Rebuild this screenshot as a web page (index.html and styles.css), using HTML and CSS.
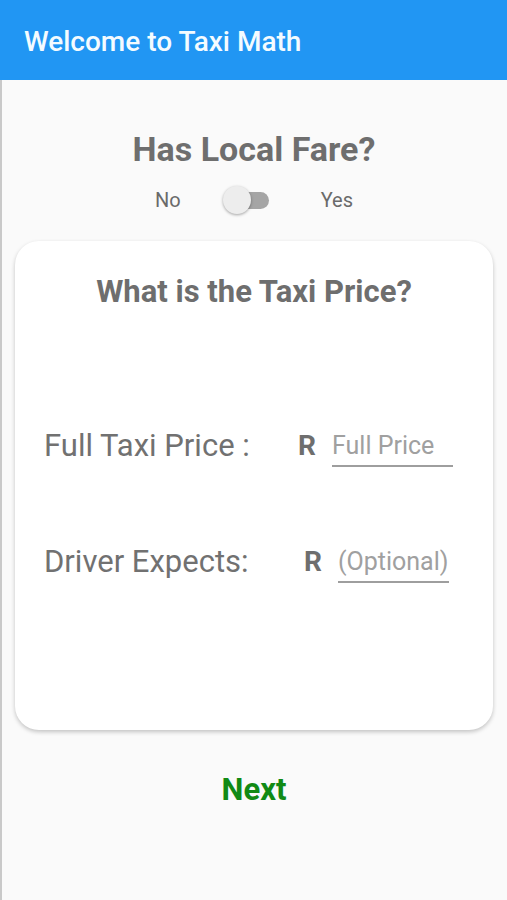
FILE: index.html
```html
<!DOCTYPE html>
<html lang="en">
<head>
    <meta charset="UTF-8">
    <title>Taxi Math</title>
    <link rel="stylesheet" href="styles.css">
</head>
<body>
<div class="app">
    <div class="topbar">Welcome to Taxi Math</div>
    <div class="page">
        <h1 class="question">Has Local Fare?</h1>
        <div class="toggle-row">
            <span class="opt">No</span>
            <span class="switch"><span class="track"></span><span class="thumb"></span></span>
            <span class="opt">Yes</span>
        </div>

        <div class="card">
            <h2 class="card-title">What is the Taxi Price?</h2>
            <div class="fields">
                <div class="field">
                    <span class="label">Full Taxi Price :</span>
                    <span class="cur">R</span>
                    <input class="amount" type="text" placeholder="Full Price">
                </div>
                <div class="field field-opt">
                    <span class="label">Driver Expects:</span>
                    <span class="cur">R</span>
                    <input class="amount" type="text" placeholder="(Optional)">
                </div>
            </div>
        </div>

        <div class="next">Next</div>
    </div>
</div>
</body>
</html>
```

FILE: styles.css
```css
* {
    padding: 0;
    margin: 0;
    box-sizing: border-box;
}

body {
    font-family: Roboto, "Liberation Sans", sans-serif;
    background: #fafafa;
}

.app {
    width: 507px;
    height: 900px;
    display: flex;
    flex-direction: column;
}

.topbar {
    height: 80px;
    background: #2196f3;
    color: #f4fbff;
    font-size: 28px;
    font-weight: 500;
    padding: 26px 0 0 24px;
    line-height: 32px;
}

.page {
    flex: 1;
    border-left: 2px solid #c9c9c9;
    padding: 0 14px 0 13px;
    display: flex;
    flex-direction: column;
}

.question {
    margin-top: 49px;
    text-align: center;
    font-size: 34px;
    font-weight: 700;
    color: #6e6e6e;
    line-height: 40px;
}

.toggle-row {
    margin-top: 16px;
    height: 30px;
    display: flex;
    align-items: center;
    justify-content: center;
    font-size: 20px;
    color: #6a6a6a;
}

.toggle-row .opt {
    line-height: 24px;
}

.switch {
    position: relative;
    width: 46px;
    height: 28px;
    margin: 0 52px 0 42px;
}

.track {
    position: absolute;
    left: 10px;
    top: 6px;
    width: 36px;
    height: 17px;
    border-radius: 9px;
    background: #a5a5a5;
}

.thumb {
    position: absolute;
    left: 0;
    top: 0;
    width: 28px;
    height: 28px;
    border-radius: 50%;
    background: #ededed;
    box-shadow: 0 1px 3px rgba(0, 0, 0, 0.35);
}

.card {
    margin-top: 26px;
    height: 489px;
    background: #fff;
    border-radius: 24px;
    box-shadow: 0 2px 4px rgba(0, 0, 0, 0.22);
    padding-top: 33px;
}

.card-title {
    text-align: center;
    font-size: 31px;
    font-weight: 700;
    color: #6e6e6e;
    line-height: 36px;
}

.fields {
    margin-top: 118px;
    display: flex;
    flex-direction: column;
    gap: 80px;
}

.field {
    display: flex;
    align-items: flex-end;
    padding-left: 29px;
    height: 36px;
}

.label {
    width: 254px;
    font-size: 31px;
    color: #717171;
    line-height: 36px;
}

.cur {
    width: 34px;
    font-size: 28px;
    font-weight: 700;
    color: #6e6e6e;
    line-height: 36px;
}

.amount {
    width: 121px;
    height: 39px;
    margin-bottom: -3px;
    border: 0;
    border-bottom: 2px solid #9e9e9e;
    background: transparent;
    outline: none;
    font-family: Roboto, "Liberation Sans", sans-serif;
    font-size: 25px;
    color: #666;
    padding: 0 0 3px 0;
}

.amount::placeholder {
    color: #a0a0a0;
}

.field-opt .label {
    width: 260px;
}

.field-opt .amount {
    width: 111px;
}

.next {
    margin-top: 42px;
    text-align: center;
    font-size: 31px;
    font-weight: 700;
    color: #118a14;
    line-height: 36px;
}
```
